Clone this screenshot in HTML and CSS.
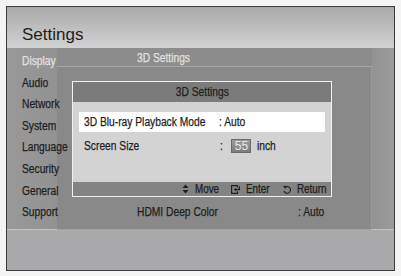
FILE: index.html
```html
<!DOCTYPE html>
<html>
<head>
<meta charset="utf-8">
<link rel="stylesheet" href="styles.css">
</head>
<body>
<div class="frame">
  <div class="title">Settings</div>
  <div class="main">
    <ul class="menu">
      <li class="sel"><span class="t">Display</span></li>
      <li><span class="t">Audio</span></li>
      <li><span class="t">Network</span></li>
      <li><span class="t">System</span></li>
      <li><span class="t">Language</span></li>
      <li><span class="t">Security</span></li>
      <li><span class="t">General</span></li>
      <li><span class="t">Support</span></li>
    </ul>
    <div class="content">
      <div class="chead"><span class="t">3D Settings</span></div>
      <div class="cbody">
        <div class="crow"><span class="lbl"><span class="t">HDMI Deep Color</span></span><span class="t">: Auto</span></div>
      </div>
    </div>
    <div class="band"></div>
  </div>
  <div class="bottom"></div>

  <div class="popup">
    <div class="phead"><span class="t tc">3D Settings</span></div>
    <div class="pbody">
      <div class="prow hl"><span class="plbl"><span class="t">3D Blu-ray Playback Mode</span></span><span class="t">: Auto</span></div>
      <div class="prow"><span class="plbl"><span class="t">Screen Size</span></span><span class="t colon">:</span><span class="num">55</span><span class="t">inch</span></div>
    </div>
    <div class="pfoot">
      <span class="fi"><svg class="ic" width="7" height="10" viewBox="0 0 7 10"><path d="M3.5 0.5 L6.5 4 L0.5 4 Z M3.5 9.5 L6.5 6 L0.5 6 Z" fill="#1e1e1e"/></svg><span class="ft w-move"><span class="t">Move</span></span></span>
      <span class="fi"><svg class="ic" width="9" height="9" viewBox="0 0 9 9"><path d="M6.5 2.6 V0.6 H0.6 V8.4 H6.5 V6.6" fill="none" stroke="#1e1e1e" stroke-width="1.1"/><path d="M8.4 1.2 V4.6 H4" fill="none" stroke="#1e1e1e" stroke-width="1.1"/><path d="M2.8 4.6 L5.2 2.8 L5.2 6.4 Z" fill="#1e1e1e"/></svg><span class="ft w-enter"><span class="t">Enter</span></span></span>
      <span class="fi"><svg class="ic" width="8" height="9" viewBox="0 0 8 9"><path d="M2.6 2 A3.3 3.3 0 1 1 1 6" fill="none" stroke="#1e1e1e" stroke-width="1.1"/><path d="M0.2 0.8 L3.8 1 L2 4.1 Z" fill="#1e1e1e"/></svg><span class="ft w-return"><span class="t">Return</span></span></span>
    </div>
  </div>
</div>
</body>
</html>
```
FILE: styles.css
```css
* { box-sizing: border-box; }
html, body { margin: 0; padding: 0; }
body {
  width: 401px;
  height: 276px;
  background: #f4f4f4;
  padding: 6px;
  font-family: "Liberation Sans", Arial, sans-serif;
  overflow: hidden;
}
.t {
  display: inline-block;
  white-space: nowrap;
  transform: scaleX(0.82);
  transform-origin: 0 50%;
  -webkit-text-stroke: 0.25px currentColor;
}
.t.tc { transform-origin: 50% 50%; }
.frame {
  position: relative;
  width: 389px;
  height: 265px;
  border: 1px solid #3a3a3a;
  display: flex;
  flex-direction: column;
  background: #a9a9ab;
}
.title {
  height: 41px;
  flex: none;
  background: linear-gradient(#a9a9a9, #c2c2c2 60%, #d2d2d2);
  font-size: 17px;
  color: #1e1e1e;
  padding: 18px 0 0 15px;
  line-height: 20px;
}
.main {
  height: 182px;
  flex: none;
  display: flex;
  background: #8c8c8c;
  font-size: 12.5px;
}
.menu {
  list-style: none;
  margin: 0;
  padding: 3px 0 0 15px;
  width: 50px;
  flex: none;
  background: linear-gradient(90deg, #999999, #929292);
  border-bottom: 1px solid #c4c4c4;
  color: #1e1e1e;
}
.menu li {
  height: 21.6px;
  line-height: 21.6px;
  white-space: nowrap;
}
.menu li.sel { color: #e2e2e2; }
.content {
  flex: 1;
  display: flex;
  flex-direction: column;
  border-bottom: 1px solid #a2a2a2;
}
.chead {
  height: 19px;
  flex: none;
  border-bottom: 1px solid #a6a6a6;
  padding: 3px 0 0 80px;
  color: #e0e0e0;
  line-height: 14px;
}
.cbody {
  flex: 1;
  border-right: 1px solid #9c9c9c;
  background: #898989;
  display: flex;
  flex-direction: column;
  justify-content: flex-end;
  padding: 0 0 6px 80px;
}
.crow {
  display: flex;
  color: #1e1e1e;
  height: 22px;
  line-height: 22px;
}
.crow .lbl { width: 161px; flex: none; }
.band {
  width: 22px;
  flex: none;
  background: linear-gradient(90deg, #939393, #9a9a9a);
  border-bottom: 1px solid #c4c4c4;
}
.bottom { flex: 1; background: #a9a9ab; }

.popup {
  position: absolute;
  left: 65px;
  top: 74px;
  width: 260px;
  height: 116px;
  border: 1.5px solid #f2f2f2;
  display: flex;
  flex-direction: column;
  background: #d3d3d3;
  font-size: 12.5px;
}
.phead {
  height: 20px;
  flex: none;
  background: #7b7b7b;
  text-align: center;
  line-height: 20px;
  color: #1e1e1e;
}
.pbody {
  flex: 1;
  padding: 10px 6px 0 6px;
}
.prow {
  display: flex;
  align-items: center;
  height: 20px;
  line-height: 20px;
  color: #1e1e1e;
  padding-left: 5px;
  margin-bottom: 4px;
}
.prow.hl { background: #ffffff; }
.plbl { width: 135px; flex: none; }
.colon { margin-left: 1px; }
.num {
  display: inline-block;
  width: 20px;
  height: 14px;
  line-height: 12px;
  margin: 0 6px 0 8px;
  text-align: center;
  font-size: 12px;
  color: #e8e8e8;
  background: linear-gradient(#9c9c9c, #7e7e7e);
  border: 1px solid #6a6a6a;
}
.pfoot {
  height: 14px;
  flex: none;
  background: #838383;
  display: flex;
  justify-content: flex-end;
  gap: 13px;
  padding-right: 5px;
  font-size: 12px;
  line-height: 14px;
  color: #1e1e1e;
}
.fi { display: flex; align-items: center; gap: 6px; }
.ic { flex: none; }
.ft { display: inline-block; }
.w-move { width: 23px; }
.w-enter { width: 24px; }
.w-return { width: 29px; }
```
